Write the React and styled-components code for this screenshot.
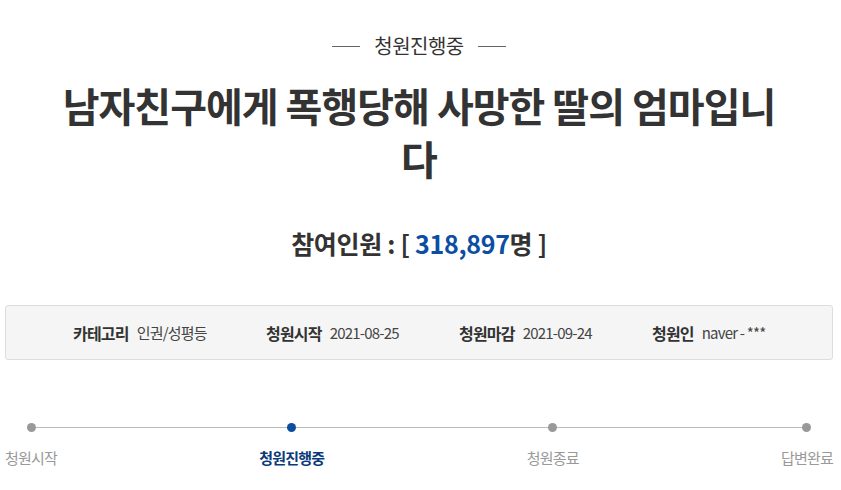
import React from "react";
import styled, { createGlobalStyle } from "styled-components";

const GlobalStyle = createGlobalStyle`
  body {
    margin: 0;
    background: #fff;
    font-family: "Noto Sans CJK KR", "Noto Sans", sans-serif;
    color: #333;
  }
`;

const steps = [
  { label: "청원시작", active: false },
  { label: "청원진행중", active: true },
  { label: "청원종료", active: false },
  { label: "답변완료", active: false },
];

const info = [
  { label: "카테고리", value: "인권/성평등" },
  { label: "청원시작", value: "2021-08-25" },
  { label: "청원마감", value: "2021-09-24" },
  { label: "청원인", value: "naver - ***" },
];

export default function App() {
  return (
    <Page>
      <GlobalStyle />
      <Status>청원진행중</Status>
      <Title>남자친구에게 폭행당해 사망한 딸의 엄마입니다</Title>
      <Count>
        참여인원 : [ <Num>318,897</Num>명 ]
      </Count>
      <InfoBox>
        {info.map(item => (
          <InfoItem key={item.label}>
            <InfoLabel>{item.label}</InfoLabel>
            <InfoValue>{item.value}</InfoValue>
          </InfoItem>
        ))}
      </InfoBox>
      <Track>
        {steps.map(step => (
          <Step key={step.label}>
            <Dot active={step.active} />
            <StepLabel active={step.active}>{step.label}</StepLabel>
          </Step>
        ))}
      </Track>
    </Page>
  );
}

const Page = styled.div`
  width: 841px;
  height: 490px;
  padding: 0 8px 0 5px;
  box-sizing: border-box;
  overflow: hidden;
  display: flex;
  flex-direction: column;
  align-items: center;
`;

const Status = styled.div`
  margin-top: 33px;
  display: flex;
  align-items: center;
  gap: 14px;
  font-size: 20px;
  line-height: 26px;
  letter-spacing: -0.5px;
  color: #333;
  &::before,
  &::after {
    content: "";
    width: 28px;
    height: 1px;
    background: #666;
  }
`;

const Title = styled.h1`
  margin: 20px 0 0;
  width: 730px;
  text-align: center;
  font-size: 40px;
  line-height: 53px;
  font-weight: 700;
  letter-spacing: -1px;
  color: #333;
`;

const Count = styled.div`
  margin-top: 42px;
  font-size: 25px;
  line-height: 32px;
  font-weight: 700;
  letter-spacing: -0.3px;
  color: #333;
`;

const Num = styled.span`
  color: #0b4ea2;
`;

const InfoBox = styled.div`
  margin-top: 46px;
  align-self: stretch;
  height: 55px;
  box-sizing: border-box;
  background: #f5f5f5;
  border: 1px solid #ddd;
  border-radius: 3px;
  display: grid;
  grid-template-columns: repeat(4, 193px);
  padding-left: 67px;
  align-items: center;
`;

const InfoItem = styled.div`
  display: flex;
  align-items: center;
  gap: 8px;
  letter-spacing: -0.8px;
`;

const InfoLabel = styled.span`
  font-size: 16px;
  font-weight: 700;
  color: #333;
`;

const InfoValue = styled.span`
  font-size: 15px;
  color: #444;
`;

const Track = styled.div`
  margin-top: 62px;
  align-self: stretch;
  position: relative;
  display: flex;
  justify-content: space-between;
  &::before {
    content: "";
    position: absolute;
    left: 26px;
    right: 26px;
    top: 5px;
    height: 1px;
    background: #bbb;
  }
`;

const Step = styled.div`
  position: relative;
  display: flex;
  flex-direction: column;
  align-items: center;
  gap: 16px;
`;

const Dot = styled.span`
  width: 9px;
  height: 9px;
  border-radius: 50%;
  margin-top: 1px;
  background: ${p => (p.active ? "#0b4ea2" : "#999")};
`;

const StepLabel = styled.span`
  font-size: 15px;
  line-height: 20px;
  letter-spacing: -0.8px;
  font-weight: ${p => (p.active ? 700 : 400)};
  color: ${p => (p.active ? "#0b3a7a" : "#999")};
`;
